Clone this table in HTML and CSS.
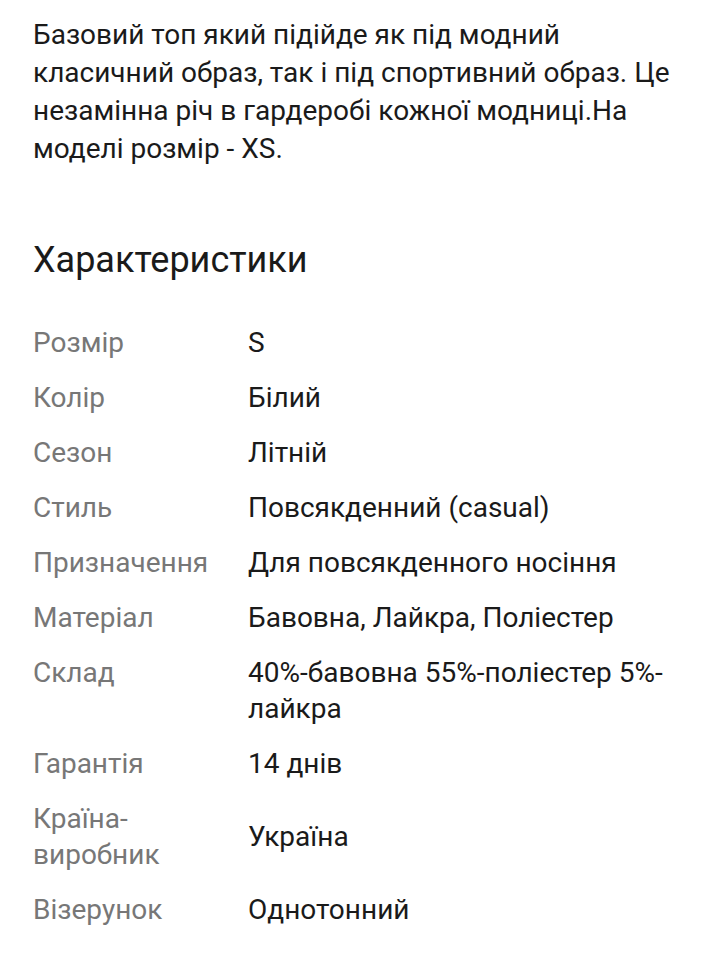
FILE: index.html
```html
<!DOCTYPE html>
<html lang="uk">
<head>
<meta charset="utf-8">
<title>Характеристики</title>
<link rel="stylesheet" href="styles.css">
</head>
<body>
<main class="page">
  <p class="description">Базовий топ який підійде як під модний класичний образ, так і під спортивний образ. Це незамінна річ в гардеробі кожної модниці.На моделі розмір - XS.</p>
  <h2 class="title">Характеристики</h2>
  <dl class="specs">
    <div class="row"><dt>Розмір</dt><dd>S</dd></div>
    <div class="row"><dt>Колір</dt><dd>Білий</dd></div>
    <div class="row"><dt>Сезон</dt><dd>Літній</dd></div>
    <div class="row"><dt>Стиль</dt><dd>Повсякденний (casual)</dd></div>
    <div class="row"><dt>Призначення</dt><dd>Для повсякденного носіння</dd></div>
    <div class="row"><dt>Матеріал</dt><dd>Бавовна, Лайкра, Поліестер</dd></div>
    <div class="row"><dt>Склад</dt><dd>40%-бавовна 55%-поліестер 5%-лайкра</dd></div>
    <div class="row"><dt>Гарантія</dt><dd>14 днів</dd></div>
    <div class="row"><dt>Країна-<br>виробник</dt><dd>Україна</dd></div>
    <div class="row"><dt>Візерунок</dt><dd>Однотонний</dd></div>
  </dl>
</main>
</body>
</html>
```

FILE: styles.css
```css
html, body {
  margin: 0;
  padding: 0;
  background: #ffffff;
}

body {
  font-family: Roboto, "Noto Sans", "Liberation Sans", sans-serif;
  color: #1a1a1a;
}

.page {
  padding: 16px 40px 0 33px;
}

.description {
  margin: 0;
  font-size: 28px;
  line-height: 38px;
}

.title {
  margin: 70px 0 0;
  font-size: 36px;
  font-weight: 400;
  line-height: 44px;
}

.specs {
  margin: 33px 0 0;
  padding: 0;
}

.row {
  display: grid;
  grid-template-columns: 215px 1fr;
  padding: 10px 0 9px;
  font-size: 28px;
  line-height: 36px;
}

.row dt {
  align-self: start;
  color: #777777;
}

.row dd {
  margin: 0;
  align-self: center;
  color: #1a1a1a;
}
```
